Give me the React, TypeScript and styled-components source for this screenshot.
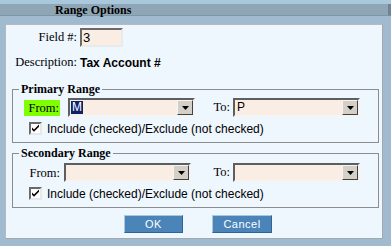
import React from 'react'
import styled, { createGlobalStyle } from 'styled-components'

const Global = createGlobalStyle`
  html, body {
    margin: 0;
    padding: 0;
    background: #a0bbcf;
  }
`

type Range = {
  title: string
  from: string
  to: string
  highlight?: boolean
}

const ranges: Range[] = [
  { title: 'Primary Range', from: 'M', to: 'P', highlight: true },
  { title: 'Secondary Range', from: '', to: '' },
]

const Arrow = () => (
  <svg width="7" height="4" viewBox="0 0 7 4">
    <path d="M0 0h7L3.5 4z" fill="#000" />
  </svg>
)

const Check = () => (
  <svg width="9" height="9" viewBox="0 0 9 9">
    <path d="M1 3.5l2 2L8 0.5v2.2L3 7.7 1 5.7z" fill="#000" />
  </svg>
)

const Combo = ({ value, selected }: { value: string; selected?: boolean }) => (
  <Select>
    <Value>{value && <Chosen selected={selected}>{value}</Chosen>}</Value>
    <DropButton>
      <Arrow />
    </DropButton>
  </Select>
)

const App = () => {
  return (
    <>
      <Global />
      <Window>
        <TitleBar>Range Options</TitleBar>
        <Panel>
          <InfoRow>
            <Label>Field #:</Label>
            <FieldInput>3</FieldInput>
          </InfoRow>
          <InfoRow spaced>
            <Label>Description:</Label>
            <Strong>Tax Account #</Strong>
          </InfoRow>
          {ranges.map((r, i) => (
            <Group key={r.title} first={i === 0}>
              <Legend>{r.title}</Legend>
              <RangeRow>
                <FromCell>
                  <FromLabel highlight={r.highlight}>From:</FromLabel>
                  <Combo value={r.from} selected={r.highlight} />
                </FromCell>
                <ToLabel>To:</ToLabel>
                <Combo value={r.to} />
              </RangeRow>
              <CheckRow>
                <CheckBox>
                  <Check />
                </CheckBox>
                Include (checked)/Exclude (not checked)
              </CheckRow>
            </Group>
          ))}
          <Buttons>
            <Button>OK</Button>
            <Button wide>Cancel</Button>
          </Buttons>
        </Panel>
      </Window>
    </>
  )
}

export default App

const Window = styled.div`
width: 391px;
height: 246px;
background: #a0bbcf;
border-top: 4px solid #aac8dc;
box-sizing: border-box;
overflow: hidden;
`
const TitleBar = styled.div`
height: 11px;
line-height: 12px;
background: #8ea6b5;
border-bottom: 1px solid #7e95a4;
border-right: 3px solid #6f8593;
padding-left: 55px;
font-family: "Liberation Serif", serif;
font-weight: 700;
font-size: 12px;
color: #000;
`
const Panel = styled.div`
margin: 8px 8px 0 5px;
width: 378px;
height: 215px;
box-sizing: border-box;
background: #eef6fe;
border: 1px solid #b6b9bd;
border-right-color: #a5a8ab;
border-bottom-color: #a5a8ab;
padding-top: 3px;
`
const InfoRow = styled.div<{ spaced?: boolean }>`
display: flex;
align-items: center;
height: 19px;
margin-top: ${p => (p.spaced ? '6px' : '0')};
`
const Label = styled.div`
width: 71px;
margin-right: 3px;
text-align: right;
font-family: "Liberation Serif", serif;
font-size: 12.5px;
color: #000;
`
const FieldInput = styled.div`
width: 43px;
height: 19px;
box-sizing: border-box;
background: #faeee4;
border: 2px solid;
border-color: #6a6a6a #eaeaea #eaeaea #6a6a6a;
font-family: "Liberation Sans", sans-serif;
font-size: 13px;
line-height: 15px;
padding-left: 1px;
`
const Strong = styled.div`
font-family: "Liberation Sans", sans-serif;
font-weight: 700;
font-size: 12px;
color: #000;
`
const Group = styled.fieldset<{ first?: boolean }>`
margin: ${p => (p.first ? '10px' : '3px')} 3px 0 6px;
padding: ${p => (p.first ? '2px' : '3px')} 0 7px 11px;
border: 1px solid #8c8c8c;
min-width: 0;
`
const Legend = styled.legend`
padding: 0 2px;
margin-left: -5px;
font-family: "Liberation Serif", serif;
font-weight: 700;
font-size: 12px;
line-height: 14px;
color: #000;
`
const RangeRow = styled.div`
display: grid;
grid-template-columns: 181px 28px 126px;
align-items: center;
height: 19px;
`
const FromCell = styled.div`
display: flex;
align-items: center;
`
const FromLabel = styled.div<{ highlight?: boolean }>`
width: 36px;
height: 16px;
line-height: 16px;
box-sizing: border-box;
margin-right: ${p => (p.highlight ? '8px' : '4px')};
padding-right: ${p => (p.highlight ? '1px' : '0')};
text-align: right;
background: ${p => (p.highlight ? '#80ff00' : 'transparent')};
font-family: "Liberation Serif", serif;
font-size: 12.5px;
color: #000;
`
const ToLabel = styled.div`
text-align: right;
padding-right: 3px;
font-family: "Liberation Serif", serif;
font-size: 12.5px;
color: #000;
`
const Select = styled.div`
display: flex;
width: 127px;
height: 19px;
box-sizing: border-box;
background: #faeee4;
border: 2px solid;
border-color: #5e5e5e #f4f4f4 #f4f4f4 #5e5e5e;
`
const Value = styled.div`
flex: 1;
display: flex;
align-items: center;
padding-left: 1px;
`
const Chosen = styled.span<{ selected?: boolean }>`
font-family: "Liberation Sans", sans-serif;
font-size: 12px;
line-height: 13px;
padding: 0 1px;
color: ${p => (p.selected ? '#fff' : '#000')};
background: ${p => (p.selected ? '#0a246a' : 'transparent')};
`
const DropButton = styled.div`
width: 16px;
display: flex;
align-items: center;
justify-content: center;
box-sizing: border-box;
background: #d4d0c8;
border: 1px solid;
border-color: #f4f4f4 #404040 #404040 #f4f4f4;
`
const CheckRow = styled.div`
display: flex;
align-items: center;
margin-top: 5px;
padding-left: 5px;
height: 13px;
font-family: "Liberation Sans", sans-serif;
font-size: 12px;
color: #000;
`
const CheckBox = styled.div`
width: 13px;
height: 13px;
box-sizing: border-box;
margin-right: 5px;
display: flex;
align-items: center;
justify-content: center;
background: #fff;
border: 2px solid;
border-color: #6a6a6a #e8e8e8 #e8e8e8 #6a6a6a;
`
const Buttons = styled.div`
display: flex;
gap: 29px;
padding-left: 118px;
margin-top: 7px;
`
const Button = styled.div<{ wide?: boolean }>`
width: ${p => (p.wide ? '60px' : '59px')};
height: 18px;
box-sizing: border-box;
background: #4a84b8;
border: 1px solid;
border-color: #a9c8e0 #2f6494 #2f6494 #a9c8e0;
color: #fff;
text-align: center;
font-family: "Liberation Sans", sans-serif;
font-size: 11px;
line-height: 16px;
letter-spacing: 0.5px;
`
